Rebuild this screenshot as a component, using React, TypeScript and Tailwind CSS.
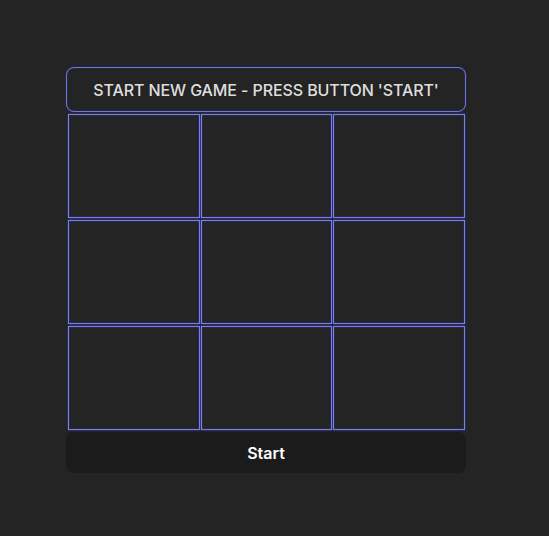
export default function App() {
  const cells = Array.from({ length: 9 });
  return (
    <div className="min-h-[536px] w-full bg-[#242424] text-[rgba(255,255,255,0.87)] font-['Inter',sans-serif]">
      <div className="flex flex-col items-start pl-[66px] pt-[67px]">
        <div className="w-[400px] h-[45px] border border-[#6f74e0] rounded-[8px] shadow-[0_0_1px_#3f46d8,inset_0_0_1px_#3f46d8] flex items-center justify-center text-[16px] font-medium tracking-[-0.1px]">
          START NEW GAME - PRESS BUTTON 'START'
        </div>
        <div className="grid grid-cols-[132px_131px_132px] auto-rows-[104px] gap-x-[1px] gap-y-[2px] ml-[2px] mt-[2px]">
          {cells.map((_, i) => (
            <div key={i} className="border border-[#7a7fe4] shadow-[0_0_1.5px_#3f46d8,inset_0_0_1.5px_#3f46d8]" />
          ))}
        </div>
        <button className="mt-[2px] w-[400px] h-[41px] rounded-[8px] bg-[#1b1b1b] text-white text-[16px] font-semibold flex items-center justify-center">
          Start
        </button>
      </div>
    </div>
  );
}
